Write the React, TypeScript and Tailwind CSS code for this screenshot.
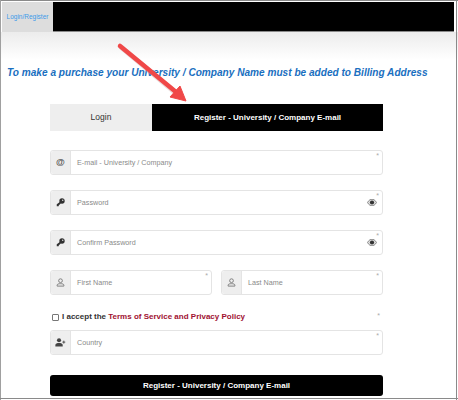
import React from "react";

function At() {
  return <span className="text-[9px] font-bold leading-none text-[#555]">@</span>;
}
function Key() {
  return (
    <svg width="9" height="9" viewBox="0 0 12 12" fill="#333">
      <circle cx="8" cy="4" r="3.6" />
      <path d="M6 4.5 L7.5 6 L3.6 9.9 L3.6 11 L1 11 L1 8.4 Z" />
      <circle cx="9" cy="3" r="0.9" fill="#eee" />
    </svg>
  );
}
function User() {
  return (
    <svg width="9" height="9" viewBox="0 0 12 12" fill="none" stroke="#777" strokeWidth="1.2">
      <circle cx="6" cy="3.6" r="2.5" />
      <path d="M1.5 10.8 V9.6 C1.5 8 3.5 7.6 6 7.6 C8.5 7.6 10.5 8 10.5 9.6 V10.8 Z" />
    </svg>
  );
}
function UserPlus() {
  return (
    <svg width="11" height="9" viewBox="0 0 15 12" fill="#444">
      <circle cx="5.5" cy="3" r="2.8" />
      <path d="M0.5 11.5 V9.4 C0.5 7.4 3 6.6 5.5 6.6 C8 6.6 10.5 7.4 10.5 9.4 V11.5 Z" />
      <path d="M12 3.5 V7.5 M10 5.5 H14" stroke="#444" strokeWidth="1.2" />
    </svg>
  );
}
function Eye() {
  return (
    <svg width="10" height="7" viewBox="0 0 14 10" className="absolute right-[5px] top-[8px]">
      <path d="M0.5 5 C3 1 5 0.4 7 0.4 C9 0.4 11 1 13.5 5 C11 9 9 9.6 7 9.6 C5 9.6 3 9 0.5 5 Z" fill="#ddd" stroke="#666" strokeWidth="1" />
      <circle cx="7" cy="5" r="3" fill="#333" />
    </svg>
  );
}

function Field({ icon, label, eye, className }: { icon: React.ReactNode; label: string; eye?: boolean; className?: string }) {
  return (
    <div className={"relative flex h-[25px] rounded-[3px] border border-[#e4e4e4] bg-white " + (className ?? "")}>
      <div className="flex w-[20px] shrink-0 items-center justify-center rounded-l-[3px] border-r border-[#e4e4e4] bg-[#eeeeee]">
        {icon}
      </div>
      <div className="flex items-center pl-[6px] text-[7.2px] leading-none text-[#8a8a8a]">{label}</div>
      <span className="absolute right-[3px] top-[1px] text-[7px] leading-[8px] text-[#aaa]">*</span>
      {eye && <Eye />}
    </div>
  );
}

export default function App() {
  return (
    <div className="relative h-[400px] w-[458px] overflow-hidden bg-white font-['Liberation_Sans',Arial,sans-serif]">
      <div className="absolute inset-x-0 top-0 h-[1px] bg-[#8a8a8a]" />
      <div className="absolute inset-y-0 left-0 w-[1px] bg-[#a0a0a0]" />
      <div className="absolute inset-y-0 right-[1px] w-[1px] bg-[#8a8a8a]" />
      <div className="absolute inset-x-0 bottom-[1px] h-[1px] bg-[#8a8a8a]" />

      <header className="flex h-[32px] pl-[2px] pr-[4px] pt-[2px]">
        <div className="flex w-[51px] items-center justify-center bg-[#dddddd] text-[6.5px] font-normal text-[#3d9be9]">
          Login/Register
        </div>
        <div className="flex-1 border-b border-[#8a8a8a] bg-black" />
      </header>

      <div className="h-[28px] bg-gradient-to-b from-[#ececec] to-white" />

      <h1 className="mt-[6px] pl-[7px] text-[10.1px] font-bold italic leading-[13px] whitespace-nowrap text-[#1a6fc0]">
        To make a purchase your University / Company Name must be added to Billing Address
      </h1>

      <div className="ml-[50px] mt-[25px] w-[333px]">
        <div className="flex h-[27px]">
          <div className="flex w-[102px] items-center justify-center bg-[#eeeeee] text-[8.5px] text-[#333]">Login</div>
          <div className="flex flex-1 items-center justify-center bg-black text-[8px] font-bold text-white">
            Register - University / Company E-mail
          </div>
        </div>

        <Field className="mt-[19px]" icon={<At />} label="E-mail - University / Company" />
        <Field className="mt-[15px]" icon={<Key />} label="Password" eye />
        <Field className="mt-[15px]" icon={<Key />} label="Confirm Password" eye />

        <div className="mt-[15px] flex gap-[9px]">
          <Field className="flex-1" icon={<User />} label="First Name" />
          <Field className="flex-1" icon={<User />} label="Last Name" />
        </div>

        <div className="relative mt-[15px] flex h-[14px] items-center pl-[2px] text-[8px] font-bold leading-none">
          <span className="mr-[3px] h-[7px] w-[7px] rounded-[1px] border border-[#777] bg-white" />
          <span className="text-[#333]">I accept the&nbsp;</span>
          <span className="text-[#a01030]">Terms of Service and Privacy Policy</span>
          <span className="absolute right-[3px] top-[2px] text-[7px] font-normal leading-[8px] text-[#aaa]">*</span>
        </div>

        <Field className="mt-[6px]" icon={<UserPlus />} label="Country" />

        <div className="mt-[20px] flex h-[21px] items-center justify-center rounded-[3px] bg-black text-[8px] font-bold text-white">
          Register - University / Company E-mail
        </div>
      </div>

      <svg className="absolute left-0 top-0" width="458" height="400" viewBox="0 0 458 400" fill="none">
        <path d="M120 46 L176 93" stroke="#c9a0a0" strokeWidth="5" strokeLinecap="round" opacity="0.4" transform="translate(1 1)" />
        <path d="M120 46 L176 92" stroke="#f04848" strokeWidth="4.5" strokeLinecap="round" />
        <path d="M186 101 L170 97 L180 86 Z" fill="#f04848" stroke="#f04848" strokeWidth="1" strokeLinejoin="round" />
      </svg>
    </div>
  );
}
